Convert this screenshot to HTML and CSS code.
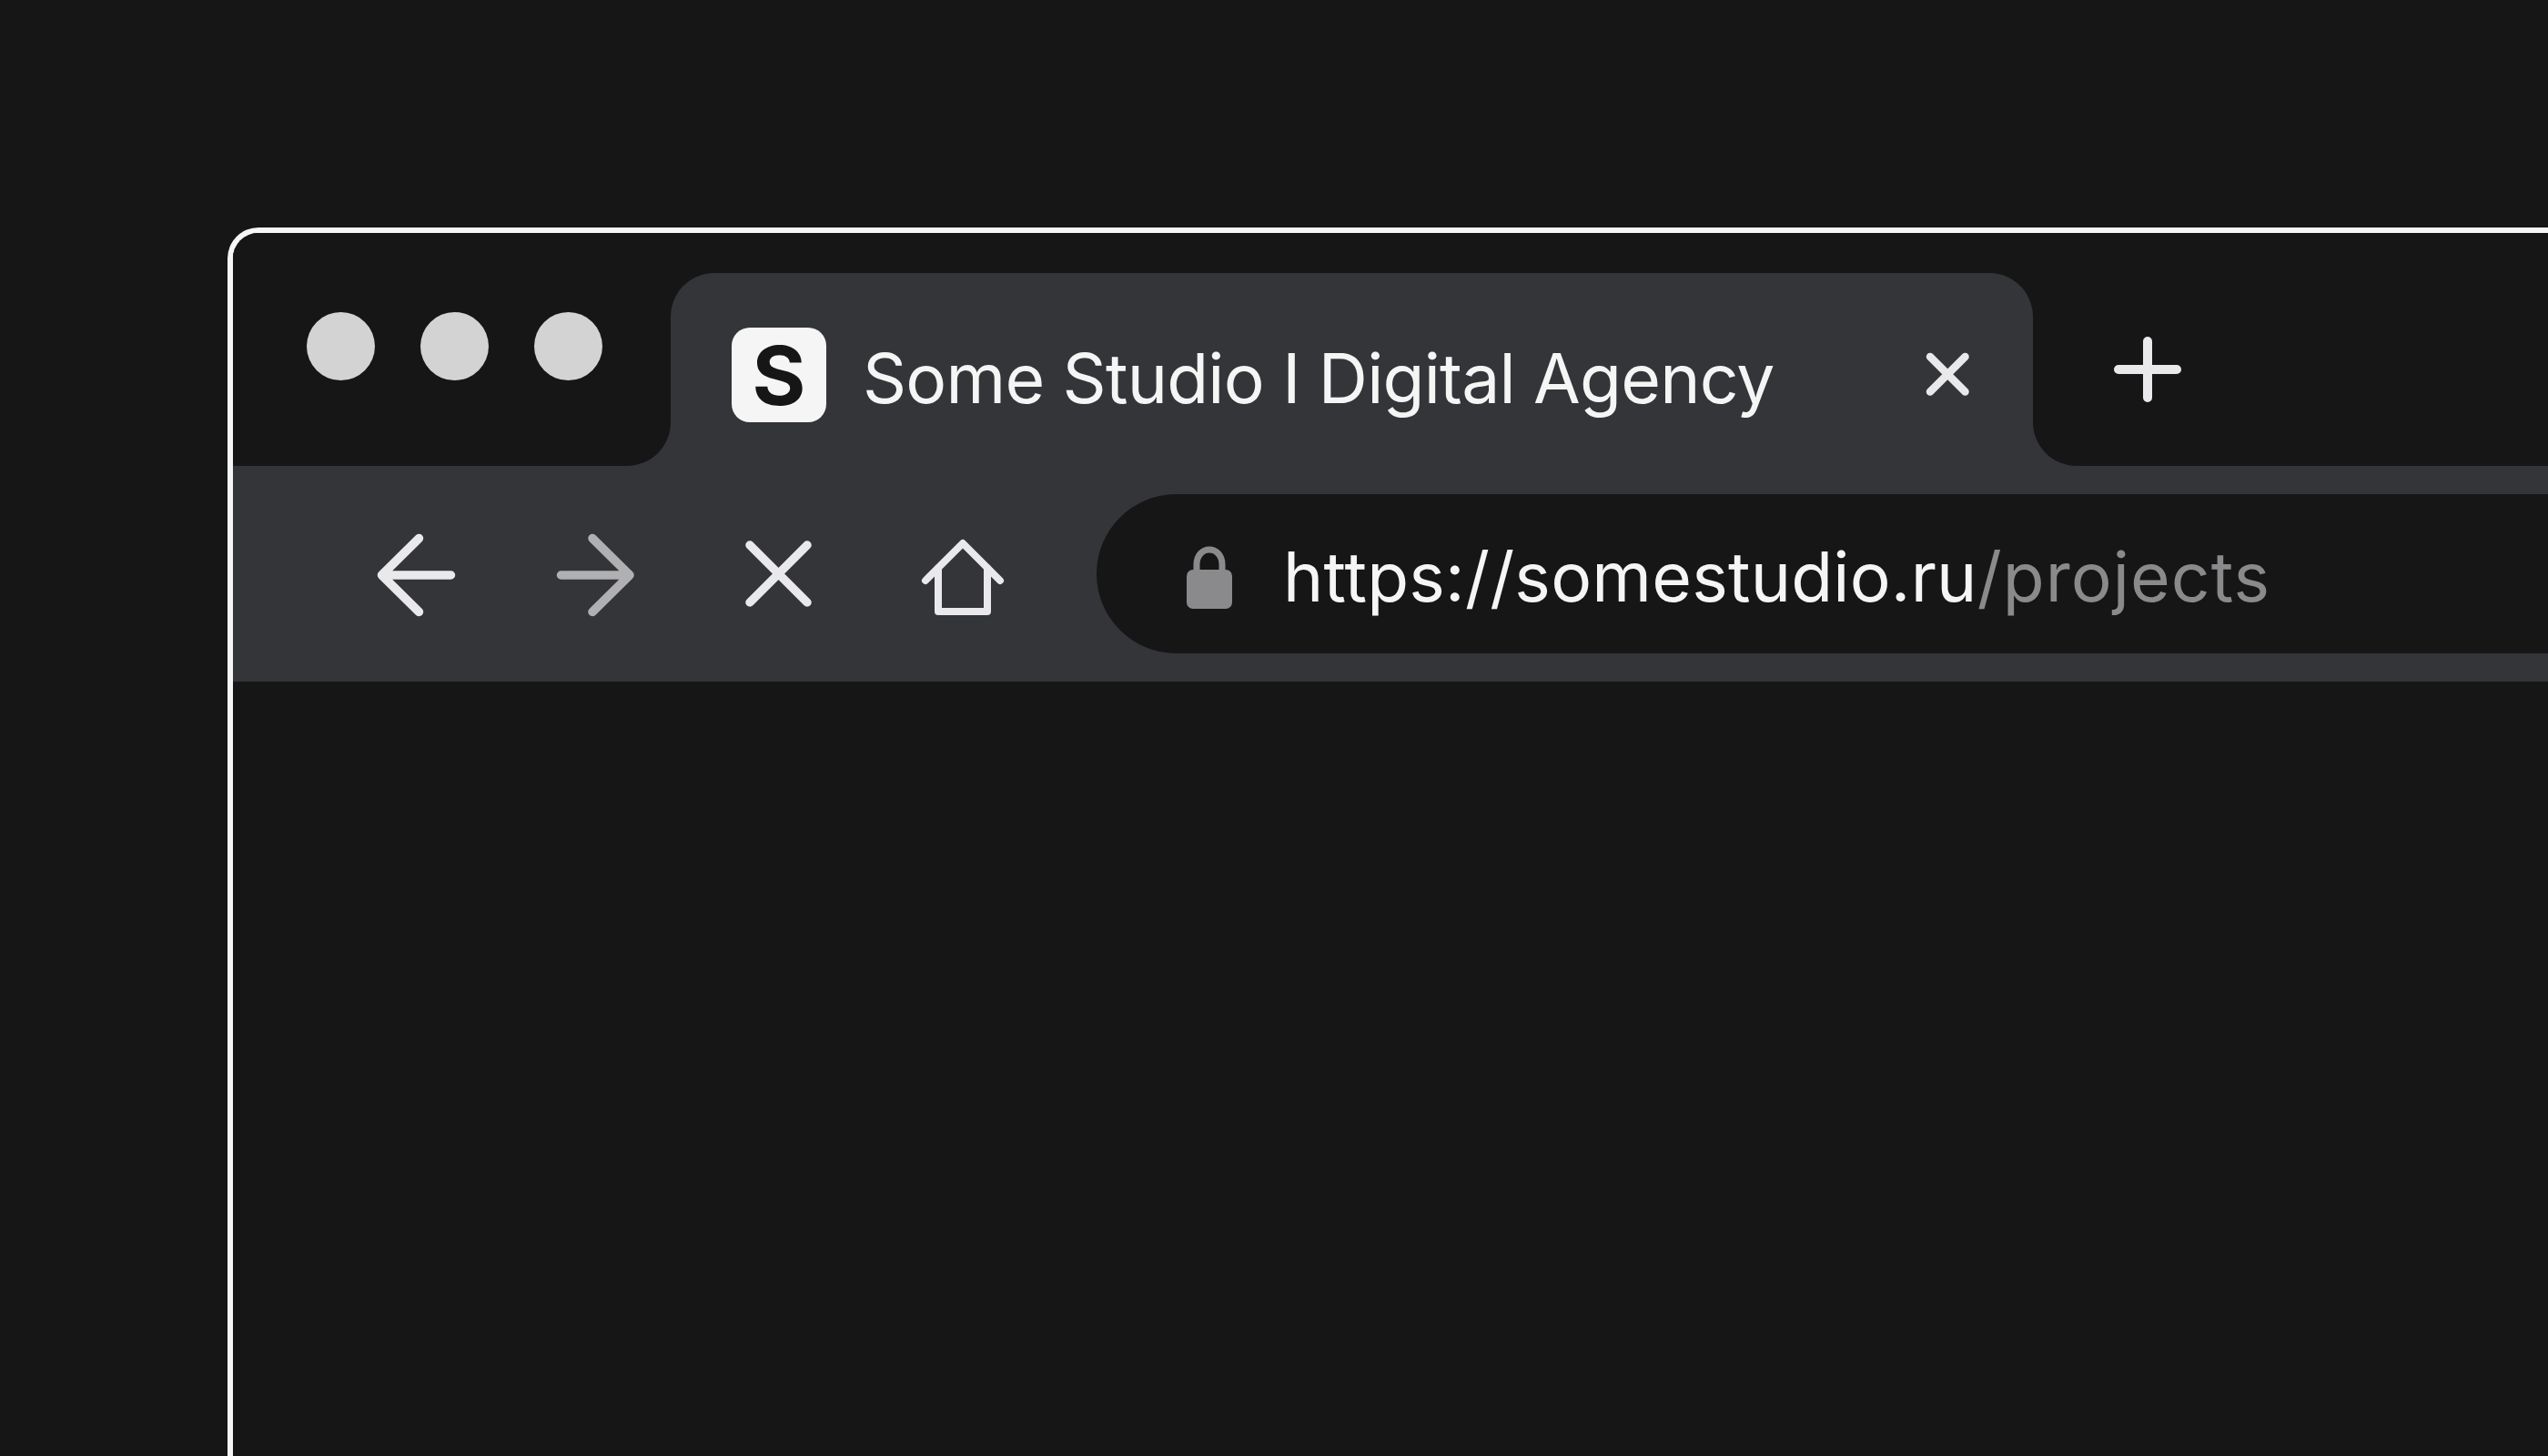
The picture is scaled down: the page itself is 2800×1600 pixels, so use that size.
FILE: index.html
```html
<!DOCTYPE html>
<html lang="en">
<head>
    <meta charset="UTF-8">
    <meta name="viewport" content="width=device-width, initial-scale=1.0">
    <title>Some Studio</title>
    <link rel="stylesheet" href="styles.css">
</head>
<body>
    <div class="window">
        <div class="tabstrip">
            <div class="traffic">
                <span class="dot"></span>
                <span class="dot"></span>
                <span class="dot"></span>
            </div>
            <div class="tab-slot">
                <div class="tab">
                    <div class="favicon">S</div>
                    <div class="tab-title">Some Studio I Digital Agency</div>
                    <svg class="tab-close" viewBox="0 0 60 60">
                        <path d="M11 11 L49.5 49.5 M49.5 11 L11 49.5"/>
                    </svg>
                </div>
            </div>
            <div class="strip-rest">
                <svg class="new-tab" viewBox="0 0 80 80">
                    <path d="M8 40 H72 M40 9 V71"/>
                </svg>
            </div>
        </div>
        <div class="toolbar">
            <div class="nav">
                <svg class="nav-icon" viewBox="0 0 100 100">
                    <path d="M87.5 50 H11.5 M52.5 9.5 L11.5 50 L52.5 90.5"/>
                </svg>
                <svg class="nav-icon dim" viewBox="0 0 100 100">
                    <path d="M8.5 50 H84 M43 9.5 L84 50 L43 90.5"/>
                </svg>
                <svg class="nav-icon" viewBox="0 0 100 100">
                    <path d="M16 17 L79 80 M79 17 L16 80"/>
                </svg>
                <svg class="nav-icon home" viewBox="0 0 100 100">
                    <path d="M9 56 L50 15 L91 56 M23 42 V90 H77 V42"/>
                </svg>
            </div>
            <div class="urlbar">
                <svg class="lock" viewBox="0 0 50 69">
                    <path class="shackle" d="M11 28 V20 C11 11 17 4 25 4 C33 4 39 11 39 20 V28"/>
                    <rect y="26" width="50" height="43" rx="7"/>
                </svg>
                <div class="url">https://somestudio.ru<span class="url-path">/projects</span></div>
            </div>
        </div>
    </div>
</body>
</html>
```

FILE: styles.css
```css
html, body {
    height: 100%;
}

body {
    margin: 0;
    padding: 250px 0 0 250px;
    box-sizing: border-box;
    overflow: hidden;
    background-color: #161616;
    font-family: Inter, "Noto Sans", sans-serif;
    color: #f5f5f5;
}

.window {
    height: 100%;
    border-top: 6px solid #f5f5f5;
    border-left: 6px solid #f5f5f5;
    border-top-left-radius: 34px;
    background-color: #161616;
    overflow: hidden;
}

/* grey behind the strip shows through the curved corners of the dark blocks */
.tabstrip {
    display: flex;
    height: 256px;
    background-color: #343539;
}

.traffic {
    display: flex;
    gap: 50px;
    width: 400px;
    padding: 87px 0 0 81px;
    background-color: #161616;
    border-bottom-right-radius: 48px;
}

.dot {
    width: 75px;
    height: 75px;
    border-radius: 50%;
    background-color: #d3d3d3;
}

.tab-slot {
    padding-top: 44px;
    background-color: #161616;
}

.tab {
    display: flex;
    align-items: flex-start;
    box-sizing: border-box;
    width: 1497px;
    height: 212px;
    padding: 60px 64px 0 67px;
    background-color: #343539;
    border-radius: 48px 48px 0 0;
}

.favicon {
    display: flex;
    align-items: center;
    justify-content: center;
    width: 104px;
    height: 104px;
    flex-shrink: 0;
    border-radius: 20px;
    background-color: #f5f5f5;
    color: #161616;
    font-size: 90px;
    font-weight: 700;
}

.tab-title {
    flex-grow: 1;
    margin-left: 40px;
    padding-top: 4px;
    font-size: 75px;
    line-height: 104px;
    letter-spacing: -0.8px;
    white-space: nowrap;
}

.tab-close {
    width: 60px;
    height: 60px;
    margin-top: 21px;
    flex-shrink: 0;
}

.tab-close path,
.new-tab path,
.nav-icon path {
    fill: none;
    stroke: #e9e9eb;
    stroke-linecap: round;
    stroke-linejoin: round;
}

.tab-close path {
    stroke-width: 8.5;
}

.strip-rest {
    flex-grow: 1;
    padding: 110px 0 0 86px;
    background-color: #161616;
    border-bottom-left-radius: 48px;
}

.new-tab {
    display: block;
    width: 80px;
    height: 80px;
}

.new-tab path {
    stroke-width: 10;
}

.toolbar {
    display: flex;
    align-items: flex-start;
    height: 237px;
    box-sizing: border-box;
    padding: 31px 0 0 152px;
    background-color: #343539;
}

.nav {
    display: flex;
    gap: 100px;
    padding-top: 39px;
}

.nav-icon {
    display: block;
    width: 100px;
    height: 100px;
}

.nav-icon path {
    stroke-width: 9.5;
}

.nav-icon.dim path {
    stroke: #b0b0b2;
}

.nav-icon.home path {
    stroke-width: 8;
}

.urlbar {
    display: flex;
    align-items: flex-start;
    flex-grow: 1;
    height: 175px;
    margin-left: 97px;
    padding-left: 99px;
    background-color: #161616;
    border-radius: 87.5px 0 0 87.5px;
}

.lock {
    width: 50px;
    height: 69px;
    margin-top: 57px;
    flex-shrink: 0;
    fill: #8a8a8c;
}

.lock .shackle {
    fill: none;
    stroke: #8a8a8c;
    stroke-width: 7;
}

.url {
    margin-left: 56px;
    padding-top: 3px;
    font-size: 75px;
    line-height: 175px;
    letter-spacing: 0.2px;
    white-space: nowrap;
}

.url-path {
    color: #8a8a8c;
    letter-spacing: 1.05px;
}
```
